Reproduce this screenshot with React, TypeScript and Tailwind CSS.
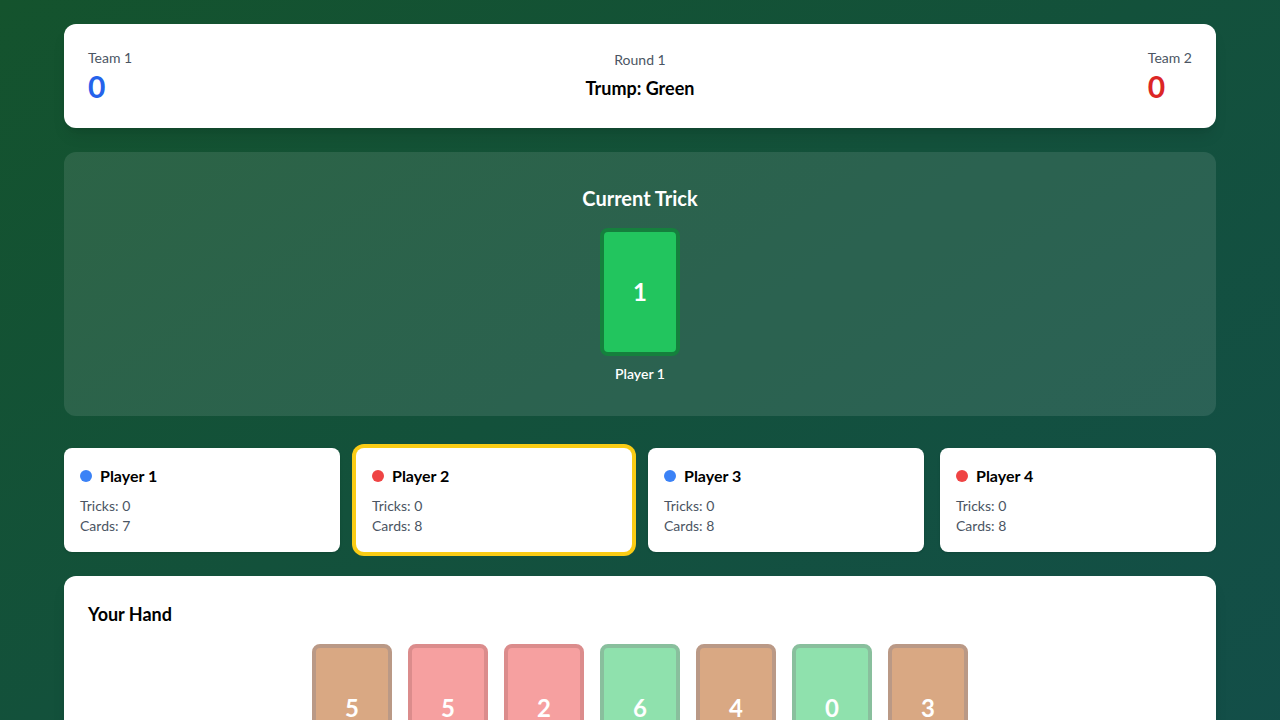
import React from "react";

const font = { fontFamily: 'Lato, "Noto Sans", sans-serif' };

type HandCard = { n: number; bg: string; border: string };

const hand: HandCard[] = [
  { n: 5, bg: "bg-[#b45309]", border: "border-[#78350f]" },
  { n: 5, bg: "bg-[#ef4444]", border: "border-[#b91c1c]" },
  { n: 2, bg: "bg-[#ef4444]", border: "border-[#b91c1c]" },
  { n: 6, bg: "bg-[#22c55e]", border: "border-[#15803d]" },
  { n: 4, bg: "bg-[#b45309]", border: "border-[#78350f]" },
  { n: 0, bg: "bg-[#22c55e]", border: "border-[#15803d]" },
  { n: 3, bg: "bg-[#b45309]", border: "border-[#78350f]" },
];

const players = [
  { name: "Player 1", dot: "bg-[#3b82f6]", tricks: 0, cards: 7, active: false },
  { name: "Player 2", dot: "bg-[#ef4444]", tricks: 0, cards: 8, active: true },
  { name: "Player 3", dot: "bg-[#3b82f6]", tricks: 0, cards: 8, active: false },
  { name: "Player 4", dot: "bg-[#ef4444]", tricks: 0, cards: 8, active: false },
];

export default function App() {
  return (
    <div
      style={font}
      className="min-h-screen bg-gradient-to-br from-[#14532d] to-[#134e4a] p-6"
    >
      <div className="max-w-[1152px] mx-auto">
        {/* Header */}
        <div className="bg-white rounded-xl shadow-lg p-6 mb-6 flex items-center justify-between">
          <div>
            <div className="text-sm leading-5 text-[#4b5563]">Team 1</div>
            <div className="text-3xl leading-9 font-bold text-[#2563eb]">0</div>
          </div>
          <div className="text-center">
            <div className="text-sm leading-5 text-[#4b5563] mb-1">Round 1</div>
            <div className="text-lg leading-7 font-bold text-black">Trump: Green</div>
          </div>
          <div>
            <div className="text-sm leading-5 text-[#4b5563]">Team 2</div>
            <div className="text-3xl leading-9 font-bold text-[#dc2626]">0</div>
          </div>
        </div>

        {/* Current trick */}
        <div className="bg-white/10 rounded-xl p-8 mb-8">
          <h2 className="text-xl leading-7 font-bold text-white text-center mb-4">
            Current Trick
          </h2>
          <div className="flex justify-center gap-4">
            <div className="flex flex-col items-center">
              <div className="w-20 h-32 rounded-lg border-4 border-[#15803d] bg-[#22c55e] flex items-center justify-center text-white text-2xl font-bold">
                1
              </div>
              <div className="mt-2 text-sm leading-5 font-semibold text-white">Player 1</div>
            </div>
          </div>
        </div>

        {/* Players */}
        <div className="grid grid-cols-4 gap-4 mb-6">
          {players.map((p) => (
            <div
              key={p.name}
              className={`bg-white rounded-lg p-4 shadow ${
                p.active ? "ring-4 ring-[#facc15]" : ""
              }`}
            >
              <div className="flex items-center gap-2 mb-2">
                <span className={`w-3 h-3 rounded-full ${p.dot}`} />
                <span className="text-base leading-6 font-bold text-black">
                  {p.name}
                </span>
              </div>
              <div className="text-sm leading-5 text-[#4b5563]">Tricks: {p.tricks}</div>
              <div className="text-sm leading-5 text-[#4b5563]">Cards: {p.cards}</div>
            </div>
          ))}
        </div>

        {/* Hand */}
        <div className="bg-white rounded-xl shadow-lg p-6">
          <h3 className="text-lg leading-7 font-bold text-black mb-4">Your Hand</h3>
          <div className="flex flex-wrap justify-center gap-4">
            {hand.map((c, i) => (
              <div
                key={i}
                className={`w-20 h-32 rounded-lg border-4 ${c.border} ${c.bg} opacity-50 flex items-center justify-center text-white text-2xl font-bold`}
              >
                {c.n}
              </div>
            ))}
          </div>
        </div>
      </div>
    </div>
  );
}
